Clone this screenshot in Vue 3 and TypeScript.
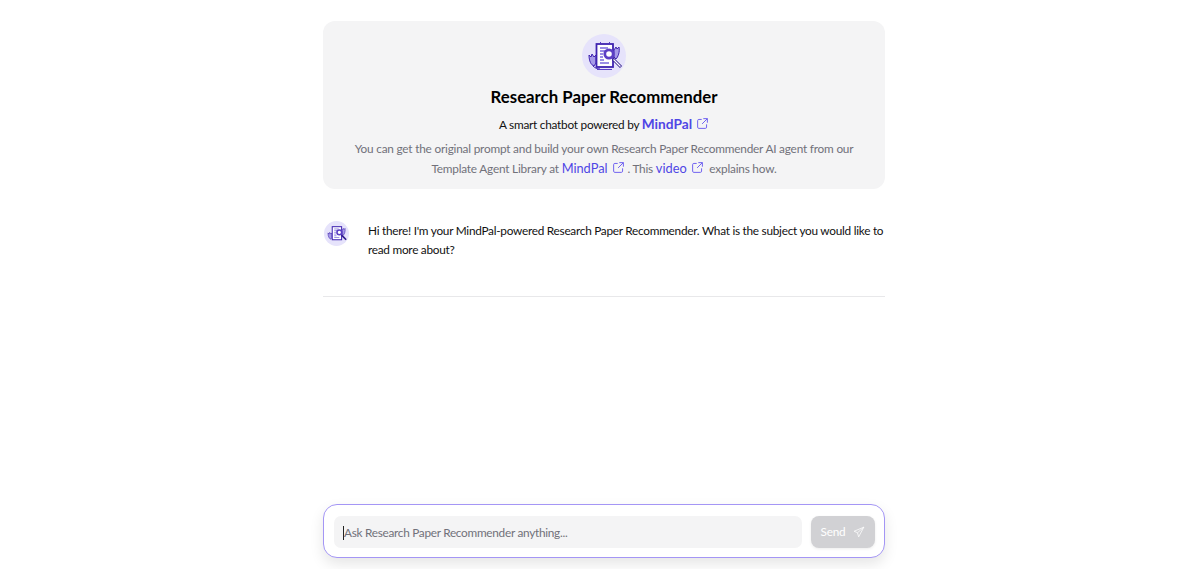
<script setup lang="ts">
const ext = "M7 3H3.5A1.5 1.5 0 0 0 2 4.5v8A1.5 1.5 0 0 0 3.5 14h8a1.5 1.5 0 0 0 1.5-1.5V9M9 2h5v5M14 2 7.5 8.5";
</script>

<template>
  <div class="page">
    <header class="card">
      <span class="avatar large">
        <svg viewBox="0 0 44 44" class="logo">
          <path d="M7 21l2 2 1-3 2 3 2-2v8l-2 3c-3-1-5-5-5-11z" fill="#a79be8" stroke="#3f23b0" stroke-width="1" />
          <path d="M11 32c2 2 4 3 7 3" fill="none" stroke="#3f23b0" stroke-width="1" />
          <path d="M37 13l-2 2-1-2-2 3v7l2 2c2-2 4-7 3-12z" fill="#a79be8" stroke="#3f23b0" stroke-width="1" />
          <rect x="14.5" y="10" width="16.5" height="23" fill="#fff" stroke="#3f23b0" stroke-width="1.8" />
          <path d="M18 8.5h1M27 8.5h1M15 35.5h15" stroke="#5b3fc4" stroke-width="1" />
          <path d="M18 14h8M18 17h5M18 20h3M18 23h3M18 26h4M18 29h9" stroke="#7a68dd" stroke-width="1.3" />
          <circle cx="27" cy="20" r="4.2" fill="#fff" stroke="#5b3fc4" stroke-width="2.8" />
          <path d="M31 25l8 8" stroke="#2e1a8c" stroke-width="3" />
          <path d="M31.5 25.5l7 7" stroke="#fff" stroke-width="1.2" />
        </svg>
      </span>
      <h1>Research Paper Recommender</h1>
      <p class="sub">A smart chatbot powered by <a class="brand">MindPal</a><svg class="ext" viewBox="0 0 16 16"><path :d="ext" /></svg></p>
      <p class="desc">
        You can get the original prompt and build your own Research Paper Recommender AI agent from our Template Agent Library at <a>MindPal</a><svg class="ext" viewBox="0 0 16 16"><path :d="ext" /></svg> . This <a>video</a><svg class="ext" viewBox="0 0 16 16"><path :d="ext" /></svg> &nbsp;explains how.
      </p>
    </header>

    <section class="message">
      <span class="avatar small">
        <svg viewBox="0 0 44 44" class="logo">
          <path d="M7 21l2 2 1-3 2 3 2-2v8l-2 3c-3-1-5-5-5-11z" fill="#a79be8" stroke="#3f23b0" stroke-width="1" />
          <path d="M37 13l-2 2-1-2-2 3v7l2 2c2-2 4-7 3-12z" fill="#a79be8" stroke="#3f23b0" stroke-width="1" />
          <rect x="14.5" y="10" width="16.5" height="23" fill="#fff" stroke="#3f23b0" stroke-width="1.8" />
          <path d="M18 14h8M18 17h5M18 20h3M18 23h3M18 26h4M18 29h9" stroke="#7a68dd" stroke-width="1.3" />
          <circle cx="27" cy="20" r="4.2" fill="#fff" stroke="#5b3fc4" stroke-width="2.8" />
          <path d="M31 25l8 8" stroke="#2e1a8c" stroke-width="3" />
        </svg>
      </span>
      <p>Hi there! I'm your MindPal-powered Research Paper Recommender. What is the subject you would like to read more about?</p>
    </section>

    <div class="spacer"></div>

    <form class="composer" @submit.prevent>
      <div class="field"><span class="caret"></span><span>Ask Research Paper Recommender anything...</span></div>
      <button class="send" type="button">
        Send
        <svg viewBox="0 0 16 16"><path d="M14.5 1.5 1.5 7l4.5 2 1.5 5.5zM14.5 1.5 6 9" /></svg>
      </button>
    </form>
  </div>
</template>

<style>
html, body { margin: 0; background: #fff; }
</style>

<style scoped>
.page {
  box-sizing: border-box;
  width: 562px;
  height: 569px;
  margin: 0 0 0 323px;
  padding: 21px 0 11px;
  display: flex;
  flex-direction: column;
  font-family: "Lato", "Open Sans", sans-serif;
  font-size: 11.8px;
  letter-spacing: -0.24px;
  color: #111;
}
.card {
  height: 168px;
  box-sizing: border-box;
  padding-top: 13px;
  background: #f4f4f5;
  border-radius: 12px;
  text-align: center;
}
.avatar {
  display: block;
  border-radius: 50%;
  background: #e6e3fb;
  flex: none;
}
.large { width: 44px; height: 44px; margin: 0 auto; }
.small { width: 25px; height: 25px; }
.logo { display: block; width: 100%; height: 100%; }
h1 {
  margin: 9px 0 0;
  font-size: 16.8px;
  line-height: 20px;
  font-weight: 700;
  letter-spacing: 0;
  color: #000;
}
.sub { margin: 8px 0 0; line-height: 20px; }
.desc {
  margin: 4px 20px 0;
  line-height: 19.5px;
  letter-spacing: -0.2px;
  color: #71717a;
}
a { color: #4f46e5; font-size: 12.8px; line-height: 1; letter-spacing: 0; }
.brand { font-size: 13.7px; font-weight: 700; }
.ext {
  width: 13px;
  height: 13px;
  margin-left: 4px;
  vertical-align: -1px;
  fill: none;
  stroke: #6d5ff0;
  stroke-width: 1.2;
}
.message {
  display: flex;
  gap: 19px;
  margin-top: 32px;
  padding: 0 0 37px 1px;
  border-bottom: 1px solid #e8e8ea;
}
.message p { margin: 0; padding-top: 1px; line-height: 18.5px; letter-spacing: -0.26px; }
.spacer { flex: 1; }
.composer {
  box-sizing: border-box;
  height: 54px;
  padding: 11px 9px 10px 10px;
  display: flex;
  gap: 9px;
  align-items: center;
  background: #fff;
  border: 1px solid #a496f5;
  border-radius: 14px;
  box-shadow: 0 6px 14px rgba(0, 0, 0, 0.1);
}
.field {
  flex: 1;
  height: 32px;
  display: flex;
  align-items: center;
  padding: 2px 0 0 9px;
  box-sizing: border-box;
  background: #f4f4f5;
  border-radius: 7px;
  color: #71717a;
  letter-spacing: -0.28px;
}
.caret { width: 1px; height: 14px; background: #222; }
.send {
  width: 64px;
  height: 32px;
  display: flex;
  align-items: center;
  justify-content: center;
  gap: 8px;
  border: 0;
  border-radius: 8px;
  background: #d1d1d4;
  color: #fff;
  font: inherit;
  letter-spacing: inherit;
  box-shadow: 0 1px 3px rgba(0, 0, 0, 0.08);
}
.send svg { width: 12px; height: 12px; fill: none; stroke: #fff; stroke-width: 1; }
</style>
